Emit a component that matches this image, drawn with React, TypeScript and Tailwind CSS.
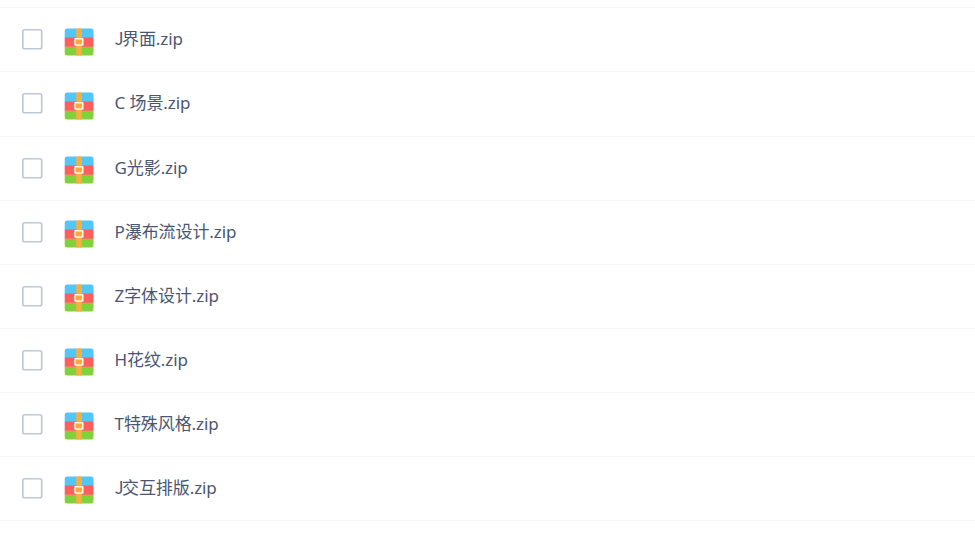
const files = [
  { prefix: "J", name: "界面.zip" },
  { prefix: "C", name: " 场景.zip" },
  { prefix: "G", name: "光影.zip" },
  { prefix: "P", name: "瀑布流设计.zip" },
  { prefix: "Z", name: "字体设计.zip" },
  { prefix: "H", name: "花纹.zip" },
  { prefix: "T", name: "特殊风格.zip" },
  { prefix: "J", name: "交互排版.zip" },
];

function Checkbox() {
  return (
    <svg width="21" height="21" viewBox="0 0 21 21" className="shrink-0">
      <rect x="0.8" y="0.8" width="18.9" height="18.9" rx="1.8" fill="#fff" stroke="#bdc7d8" strokeWidth="1.6" />
    </svg>
  );
}

function ZipIcon() {
  return (
    <svg width="30" height="28" viewBox="0 0 30 28" className="shrink-0">
      <path d="M0.7 9.5V3A2.5 2.5 0 0 1 3.2 .5h23.8A2.5 2.5 0 0 1 29.5 3v6.5z" fill="#55c5f7" />
      <path d="M0.7 18.5h28.8V25a2.5 2.5 0 0 1-2.5 2.5H3.2A2.5 2.5 0 0 1 .7 25z" fill="#80d13a" />
      <rect x="0.7" y="9.2" width="28.8" height="9.6" fill="#fc5f5d" />
      <rect x="12.2" y="0.5" width="5.6" height="27" fill="#f9ae42" />
      <rect x="11" y="10.8" width="7.8" height="6.1" rx="0.2" fill="#f9a83a" stroke="#fff5e8" strokeWidth="1.5" />
    </svg>
  );
}

export default function App() {
  return (
    <div className="h-[539px] w-full overflow-hidden bg-white pt-[7.3px] font-['Noto_Sans','Noto_Sans_CJK_SC',sans-serif]">
      <div className="border-t border-[#f2f5f9]">
        {files.map((file) => (
          <div
            key={file.prefix + file.name}
            className="flex h-[64.125px] items-center border-b border-[#f2f5f9] pl-[22px]"
          >
            <Checkbox />
            <span className="ml-[21px] mt-[3.5px] flex">
              <ZipIcon />
            </span>
            <span className="mb-[1.2px] ml-[20.5px] whitespace-pre text-[17px] leading-6 tracking-[-0.08px] text-[#4b5672]">
              {file.prefix === "J" ? (
                <span className="inline-block w-[7.5px] font-['Noto_Sans_CJK_SC',sans-serif] leading-none">J</span>
              ) : (
                file.prefix
              )}
              {file.name}
            </span>
          </div>
        ))}
      </div>
    </div>
  );
}
